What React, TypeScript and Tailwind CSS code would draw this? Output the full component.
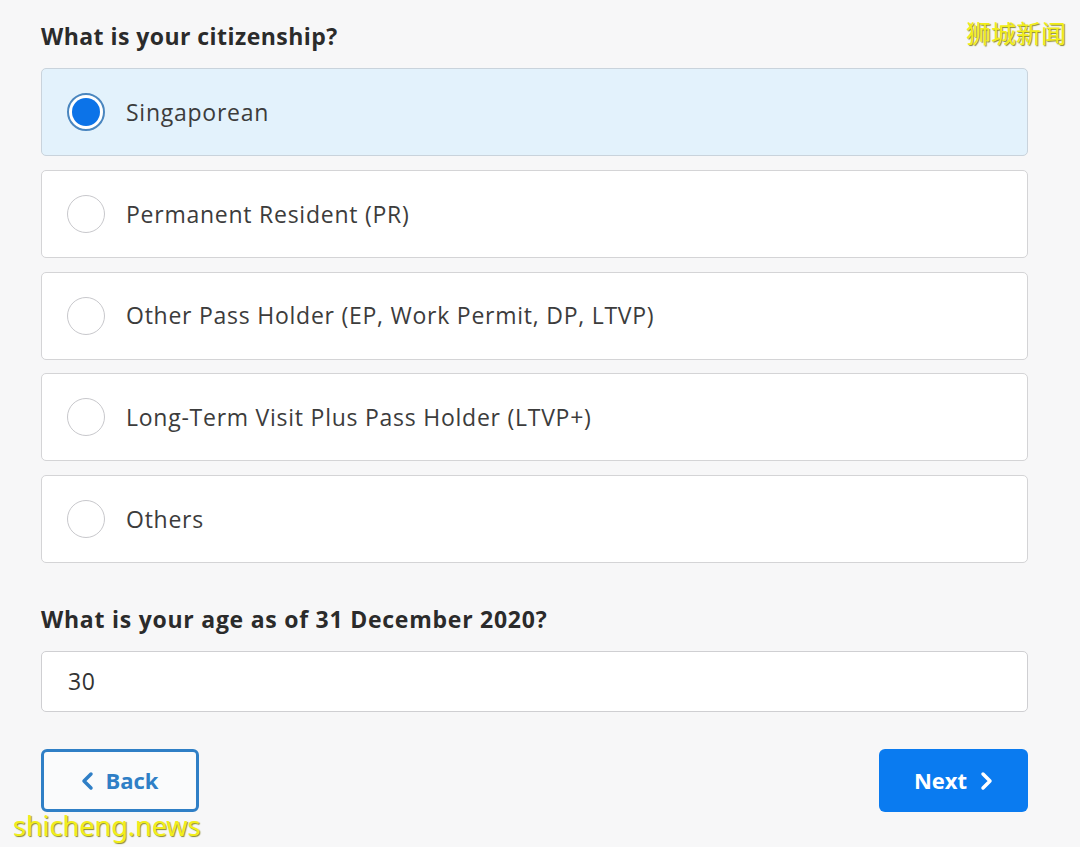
import React from "react";

const options = [
  "Singaporean",
  "Permanent Resident (PR)",
  "Other Pass Holder (EP, Work Permit, DP, LTVP)",
  "Long-Term Visit Plus Pass Holder (LTVP+)",
  "Others",
];

export default function App() {
  return (
    <div
      className="relative w-[1080px] h-[847px] overflow-hidden bg-[#f7f7f8] text-[#333]"
      style={{ fontFamily: "'Open Sans', Lato, sans-serif" }}
    >
      <div className="absolute right-[14px] top-[14px] text-[25px] text-[#f2ee1a] [text-shadow:1px_1px_1px_#8a8a30]" style={{ fontFamily: "'Noto Sans CJK SC', sans-serif" }}>
        狮城新闻
      </div>
      <div className="pl-[41px] pr-[52px] pt-[20px] flex flex-col">
        <h2 className="text-[23px] font-bold leading-[32px] text-[#2b2b2b] tracking-[0.45px]">What is your citizenship?</h2>
        <div className="mt-[16px] flex flex-col gap-[13.75px]">
          {options.map((o, i) => (
            <div
              key={o}
              className={`h-[88px] rounded-[5px] border flex items-center pl-[25px] ${
                i === 0 ? "bg-[#e3f2fc] border-[#c9d3dc]" : "bg-white border-[#d4d4d6]"
              }`}
            >
              {i === 0 ? (
                <div className="w-[38px] h-[38px] rounded-full border-2 border-[#4a86bf] bg-white flex items-center justify-center">
                  <div className="w-[28px] h-[28px] rounded-full bg-[#0c73e8]" />
                </div>
              ) : (
                <div className="w-[38px] h-[38px] rounded-full border border-[#c8c8cc] bg-white" />
              )}
              <span className="ml-[21px] text-[23px] text-[#3c3c3c] tracking-[0.75px]">{o}</span>
            </div>
          ))}
        </div>
        <h2 className="mt-[40px] text-[23px] font-bold leading-[32px] text-[#2b2b2b] tracking-[0.75px]">What is your age as of 31 December 2020?</h2>
        <div className="mt-[16px] h-[61px] rounded-[5px] border border-[#cfcfd2] bg-white flex items-center pl-[26px] text-[23px] text-[#333] tracking-[0.5px]">
          30
        </div>
        <div className="mt-[37px] flex justify-between">
          <button className="w-[158px] h-[63px] rounded-[6px] border-[3px] border-[#2f7fc6] bg-[#fafbfc] flex items-center justify-center gap-[10px] text-[#2f7fc6] text-[22px] font-bold">
            <svg width="14" height="20" viewBox="0 0 14 20"><path d="M10 3 L3 10 L10 17" fill="none" stroke="#2f7fc6" strokeWidth="3.5" strokeLinecap="round" strokeLinejoin="round" /></svg>
            Back
          </button>
          <button className="w-[149px] h-[63px] rounded-[6px] bg-[#0a7bf0] flex items-center justify-center gap-[12px] text-white text-[22px] font-bold">
            Next
            <svg width="14" height="20" viewBox="0 0 14 20"><path d="M4 3 L11 10 L4 17" fill="none" stroke="white" strokeWidth="3.5" strokeLinecap="round" strokeLinejoin="round" /></svg>
          </button>
        </div>
      </div>
      <div className="absolute left-[13px] top-[808px] text-[27px] leading-[36px] text-[#f2ee1a] [text-shadow:1px_1px_1px_#8a8a30]" style={{ fontFamily: "'Noto Sans', sans-serif" }}>
        shicheng.news
      </div>
    </div>
  );
}
